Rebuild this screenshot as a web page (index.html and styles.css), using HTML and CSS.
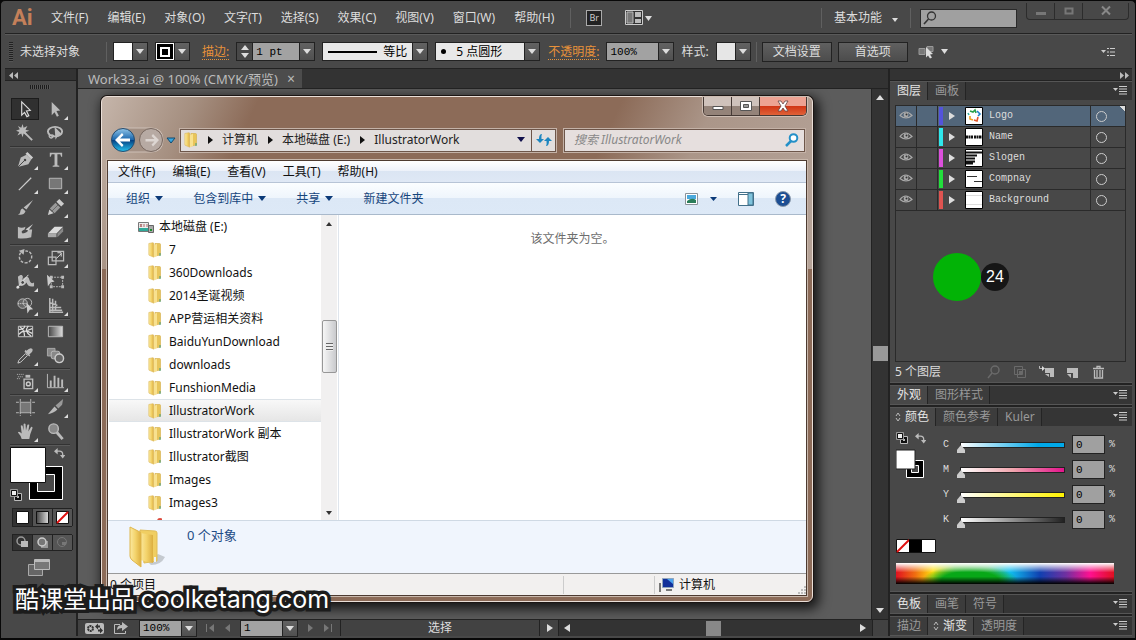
FILE: index.html
```html
<!DOCTYPE html>
<html lang="zh-CN">
<head>
    <meta charset="UTF-8">
    <meta name="viewport" content="width=device-width, initial-scale=1.0">
    <title>Work33.ai</title>
    <link rel="stylesheet" href="styles.css">
</head>
<body>
    <svg class="defs" width="0" height="0" aria-hidden="true">
        <defs>
            <linearGradient id="gold" x1="0" x2="1"><stop offset="0" stop-color="#fbe9a0"/><stop offset=".5" stop-color="#f3d36b"/><stop offset="1" stop-color="#dcae3f"/></linearGradient>
            <linearGradient id="fade" x1="0" x2="1"><stop offset="0" stop-color="#444"/><stop offset="1" stop-color="#ddd"/></linearGradient>
            <linearGradient id="blue" x1="0" x2="0" y1="0" y2="1"><stop offset="0" stop-color="#8fc4e8"/><stop offset=".48" stop-color="#1c67ad"/><stop offset=".5" stop-color="#043d80"/><stop offset="1" stop-color="#25c2ee"/></linearGradient>
            <symbol id="folder" viewBox="0 0 14 16">
                <path d="M7 1.500h4.500q1 0 1 1v10.500l-5.500 1z" fill="#e8c55b" stroke="#d4ac48" stroke-width=".6"/>
                <path d="M.8 1.500l4-.8q1 0 1 1v13.500l-4-1.700q-1 0-1-1z" fill="url(#gold)" stroke="#dcb95c" stroke-width=".6"/>
                <path d="M6 3l3-1.300v12.300l-3 1.300z" fill="#f8e18f"/>
                <path d="M12 11v3" stroke="#5aa37c" stroke-width="1.200"/>
            </symbol>
            <symbol id="eye" viewBox="0 0 14 10">
                <path d="M1 5.500q5.500-7 12 0q-6 5-12 0z" fill="none" stroke="#aaa" stroke-width="1.200"/>
                <circle cx="7" cy="5" r="2.400" fill="#aaa"/><circle cx="7.500" cy="4.500" r="1" fill="#333"/>
            </symbol>
            <symbol id="menu" viewBox="0 0 15 9">
                <path d="M0 2h5l-2.500 3z" fill="#ccc"/><path d="M6 .5h8M6 3h8M6 5.500h8M6 8h8" stroke="#ccc"/>
            </symbol>
            <symbol id="swap" viewBox="0 0 12 12">
                <path d="M3 3.500h3q3.500 0 3.500 3.500v1.500" fill="none" stroke="#bbb" stroke-width="1.400"/>
                <path d="M4 0v7L0 3.500zM6.500 7.500h6l-3 4z" fill="#bbb"/>
            </symbol>
            <symbol id="mini" viewBox="0 0 12 12">
                <path d="M4.500 4.500h7v7h-7z" fill="#111" stroke="#bbb"/><path d="M7 7h2v2H7z" fill="#bbb"/><path d="M1.500 1.500h5v5h-5z" fill="#eee" stroke="#111"/><path d="M.5.500h7v7h-7z" fill="none" stroke="#999"/>
            </symbol>
            <symbol id="updown" viewBox="0 0 6 10">
                <path d="M1 4l2-3 2 3M1 6l2 3 2-3" fill="none" stroke="#bbb"/>
            </symbol>
        </defs>
    </svg>

    <div class="app">
        <header class="menubar">
            <div class="app-logo">Ai</div>
            <nav class="menus">
                <button>文件(F)</button>
                <button>编辑(E)</button>
                <button>对象(O)</button>
                <button>文字(T)</button>
                <button>选择(S)</button>
                <button>效果(C)</button>
                <button>视图(V)</button>
                <button>窗口(W)</button>
                <button>帮助(H)</button>
            </nav>
            <span class="divider"></span>
            <button class="bridge">Br</button>
            <button class="arrange" aria-label="排列文档">
                <svg width="28" height="16" viewBox="0 0 28 16"><path d="M.5.500h17v14H.5z" fill="#333" stroke="#ccc"/><path d="M2 2h6v11H2z" fill="#777" stroke="#bbb"/><path d="M10 2h6v5h-6zM10 9h6v4h-6z" fill="#bbb"/><path d="M20 6h7l-3.500 5z" fill="#ddd"/></svg>
            </button>
            <div class="menubar-right">
                <span class="divider"></span>
                <button class="workspace-btn">基本功能 <i class="tri"></i></button>
                <span class="divider"></span>
                <label class="app-search">
                    <svg width="14" height="14" viewBox="0 0 14 14"><circle cx="8.500" cy="5" r="4" fill="none" stroke="#333" stroke-width="1.300"/><path d="M5.500 8L1 13" stroke="#333" stroke-width="1.600"/></svg>
                    <input type="text" aria-label="搜索">
                </label>
                <div class="win-btns">
                    <button aria-label="最小化"><svg width="12" height="12"><path d="M1 7h10v3H1z" fill="#777"/></svg></button>
                    <button aria-label="最大化"><svg width="12" height="12"><path d="M2.500 3.500h7v5h-7z" fill="none" stroke="#777" stroke-width="2"/></svg></button>
                    <button class="wide" aria-label="关闭"><svg width="12" height="12"><path d="M2 1.500l8 8M10 1.500l-8 8" stroke="#888" stroke-width="2"/></svg></button>
                </div>
            </div>
        </header>

        <div class="controlbar">
            <span class="grip"></span>
            <span class="selection">未选择对象</span>
            <span class="divider"></span>
            <div class="combo swatch-combo"><button class="fill" aria-label="填色"></button><button class="arrow" aria-label="填色列表"></button></div>
            <div class="combo stroke-combo"><button class="stroke" aria-label="描边颜色"><i></i></button><button class="arrow" aria-label="描边列表"></button></div>
            <a class="panel-link stroke-link" href="#">描边:</a>
            <div class="combo weight">
                <button class="stepper" aria-label="粗细"><i class="up"></i><i class="tri"></i></button>
                <input class="mono" type="text" value="1 pt" aria-label="描边粗细"><button class="arrow" aria-label="粗细列表"></button>
            </div>
            <div class="combo profile"><button class="light"><i class="line"></i>等比</button><button class="arrow" aria-label="宽度配置"></button></div>
            <div class="combo brush"><button class="light"><i class="dot"></i>5 点圆形</button><button class="arrow" aria-label="画笔"></button></div>
            <a class="panel-link" href="#">不透明度:</a>
            <div class="combo opacity"><input class="mono" type="text" value="100%" aria-label="不透明度"><button class="arrow" aria-label="不透明度列表"></button></div>
            <span class="style-label">样式:</span>
            <div class="combo"><button class="fill grey" aria-label="样式"></button><button class="arrow" aria-label="样式列表"></button></div>
            <span class="divider"></span>
            <button class="bar-btn">文档设置</button>
            <button class="bar-btn">首选项</button>
            <button class="similar" aria-label="选择类似的对象">
                <svg width="32" height="16" viewBox="0 0 32 16"><path d="M1 4.500h6v6H1zM9 2.500h6v5H9z" fill="#777" stroke="#999"/><path d="M8 3l7 7-3 .5 2 3-2 1-2-3-2 2z" fill="#ddd"/><path d="M23 5h7l-3.500 5z" fill="#ddd"/></svg>
            </button>
            <button class="bar-menu" aria-label="面板菜单">
                <svg width="15" height="10" viewBox="0 0 15 10"><path d="M0 3h5l-2.500 3z" fill="#ccc"/><path d="M6 1.500h2M9 1.500h5M6 5h2M9 5h5M6 8.500h2M9 8.500h5" stroke="#ccc"/></svg>
            </button>
        </div>

        <div class="work">
            <aside class="tools">
                <div class="dock-head"><svg width="9" height="7"><path d="M4 0v7L0 3.500zM9 0v7L5 3.500z" fill="#bbb"/></svg></div>
                <span class="tool-grip"></span>
                <div class="tool-group">
                    <button class="tool on" aria-label="选择"><svg viewBox="0 0 20 20"><path d="M6 2l9 9-4 .5 2.500 5-2 1L9 13l-3 3z" fill="#333" stroke="#ddd" stroke-width="1.200"/></svg></button>
                    <button class="tool more" aria-label="直接选择"><svg viewBox="0 0 20 20"><path d="M6 2l9 9-4 .5 2.500 5-2 1L9 13l-3 3z" fill="#bbb"/></svg></button>
                    <button class="tool" aria-label="魔棒"><svg viewBox="0 0 20 20"><path d="M7 0l1 4 4-2-2 4 4 1-4 1.500 2 3.500-4-2-1 4-1.500-4-4 2 2-3.500-3.500-1.500 4-1.500-2-3.500 3.500 2z" fill="#bbb"/><path d="M9 9l8 8" stroke="#bbb" stroke-width="2"/></svg></button>
                    <button class="tool" aria-label="套索"><svg viewBox="0 0 20 20"><ellipse cx="9.500" cy="8" rx="7.500" ry="5" fill="none" stroke="#bbb" stroke-width="2"/><path d="M4 11c-2 2 1 5 3 3s0-3-2-2" fill="none" stroke="#bbb" stroke-width="1.300"/><path d="M9 3l8 8-4 .5-3 5z" fill="#bbb"/></svg></button>
                </div>
                <div class="tool-group">
                    <button class="tool more" aria-label="钢笔"><svg viewBox="0 0 20 20"><path d="M2 18L5 8l6-3 5 5-3 5z" fill="#bbb"/><path d="M12 2l6 6-2 2-6-6z" fill="#ccc"/><path d="M2 18l7-7" stroke="#444"/><circle cx="9.500" cy="10.500" r="1.300" fill="#444"/></svg></button>
                    <button class="tool more" aria-label="文字"><svg viewBox="0 0 20 20"><path d="M4 3h13v4h-1l-1-2.500h-3V16l2 .5v1H7v-1l2-.5V4.500H6L5 7H4z" fill="#bbb"/></svg></button>
                    <button class="tool more" aria-label="直线"><svg viewBox="0 0 20 20"><path d="M3 17L16 4" stroke="#ccc" stroke-width="1.300"/></svg></button>
                    <button class="tool more" aria-label="矩形"><svg viewBox="0 0 20 20"><path d="M3.500 4.500h13v11h-13z" fill="#777" stroke="#bbb"/></svg></button>
                    <button class="tool" aria-label="画笔"><svg viewBox="0 0 20 20"><path d="M18 2l-7 10-3-2zM2 17c4 0 1-5 5-6l3 3c-1 4-6 4-8 3z" fill="#bbb"/></svg></button>
                    <button class="tool more" aria-label="铅笔"><svg viewBox="0 0 20 20"><path d="M2 18l1.500-6 4.500 4z" fill="#ccc"/><path d="M4 11l6-6 5 5-6 6z" fill="#999"/><path d="M11 4l3-3 5 5-3 3z" fill="#ccc"/><path d="M6 14l7-7" stroke="#666"/></svg></button>
                    <button class="tool" aria-label="斑点画笔"><svg viewBox="0 0 20 20"><path d="M2 5q4 2 8 0l-1 3q-5 2-2 4 5 0 6-4h4l-1 8q-7 2-14 1z" fill="#bbb"/><path d="M18 2l-5 7-3-1z" fill="#ccc"/></svg></button>
                    <button class="tool more" aria-label="橡皮擦"><svg viewBox="0 0 20 20"><path d="M2 12l7-7h9l-7 7z" fill="#ddd"/><path d="M2 12h9v4H2z" fill="#aaa"/><path d="M12 12l6-6v4l-6 6z" fill="#888"/></svg></button>
                </div>
                <div class="tool-group">
                    <button class="tool more" aria-label="旋转"><svg viewBox="0 0 20 20"><path d="M5 5a6.500 6.500 0 1 0 10 0q-3-3-8-1" fill="none" stroke="#bbb" stroke-width="1.500" stroke-dasharray="3 1.500"/><path d="M3 3l6-2-1 6z" fill="#bbb"/></svg></button>
                    <button class="tool more" aria-label="比例缩放"><svg viewBox="0 0 20 20"><path d="M6.500 3.500h12v10h-12zM2.500 9.500h8v8h-8z" fill="none" stroke="#bbb" stroke-width="1.300"/><path d="M11 11l5-5M12 5h4v4" stroke="#ddd" fill="none"/></svg></button>
                    <button class="tool more" aria-label="宽度"><svg viewBox="0 0 20 20"><path d="M2 5c4-4 7-1 4 4 4-5 7-5 8-1 1 3 2 5 5 3v4c-5 1-7-1-8-4-2 3-5 5-8 3z" fill="#bbb"/><path d="M1 17l12-14" stroke="#ddd"/><circle cx="7" cy="11" r="2" fill="#444" stroke="#ddd"/><circle cx="2" cy="16" r="1.500" fill="#ddd"/></svg></button>
                    <button class="tool" aria-label="自由变换"><svg viewBox="0 0 20 20"><path d="M5.500 5.500h12v10h-12z" fill="none" stroke="#bbb" stroke-dasharray="2 1"/><path d="M4 4h3v3H4zM16 4h3v3h-3zM4 14h3v3H4zM16 14h3v3h-3z" fill="#bbb"/><path d="M1 3l8 7-4 1-3 4z" fill="#ccc"/></svg></button>
                    <button class="tool more" aria-label="形状生成器"><svg viewBox="0 0 20 20"><circle cx="7" cy="8" r="5" fill="#666" stroke="#bbb"/><circle cx="12" cy="7" r="4.500" fill="none" stroke="#bbb"/><path d="M2 8h10" stroke="#ddd" stroke-dasharray="1 1"/><path d="M11 7l7 7-3.500.5-2.500 4z" fill="#ccc"/></svg></button>
                    <button class="tool more" aria-label="透视网格"><svg viewBox="0 0 20 20"><path d="M4 2v15h14M7 3v13M10 5v10M4 7l8 3M4 12h12M4 15h13" stroke="#bbb" stroke-width="1.600" fill="none"/></svg></button>
                </div>
                <div class="tool-group">
                    <button class="tool" aria-label="网格"><svg viewBox="0 0 20 20"><path d="M2.500 4.500h15v11h-15z" fill="#444" stroke="#ccc"/><path d="M3 8q7-1 6-4M3 13q5-6 14-1M13 4q-5 6 3 11M4 5q5 3 5 10M17 7l-5 2" stroke="#ddd" fill="none" stroke-width="1.300"/></svg></button>
                    <button class="tool" aria-label="渐变"><svg viewBox="0 0 20 20"><path d="M2.500 4.500h15v11h-15z" fill="url(#fade)" stroke="#bbb"/></svg></button>
                    <button class="tool more" aria-label="吸管"><svg viewBox="0 0 20 20"><path d="M2 18l1-3 7-7 2 2-7 7z" fill="none" stroke="#ccc"/><path d="M9 6l5 5 1-1-1-1q5-4 3-6t-6 2l-1-1z" fill="#bbb"/></svg></button>
                    <button class="tool" aria-label="混合"><svg viewBox="0 0 20 20"><path d="M1.500 2.500h8v8h-8z" fill="#888" stroke="#aaa"/><rect x="5.500" y="5.500" width="9" height="8" rx="2" fill="#888" stroke="#bbb"/><circle cx="14" cy="13" r="4.500" fill="#666" stroke="#ccc" stroke-width="1.500"/></svg></button>
                </div>
                <div class="tool-group">
                    <button class="tool more" aria-label="符号喷枪"><svg viewBox="0 0 20 20"><path d="M8.500 7.500h9v10h-9z" fill="none" stroke="#bbb" stroke-width="1.500"/><path d="M10 3h5v3h-5z" fill="#bbb"/><circle cx="13" cy="12.500" r="2" fill="none" stroke="#ccc" stroke-width="1.500"/><path d="M1 2.500h8M2 5h6M1 7h4" stroke="#bbb" stroke-dasharray="1 1"/></svg></button>
                    <button class="tool more" aria-label="柱形图"><svg viewBox="0 0 20 20"><path d="M1.500 2v14.500H19" stroke="#bbb" fill="none"/><path d="M5 9v7M9 4v12M13 6v10M17 8v8" stroke="#bbb" stroke-width="2"/></svg></button>
                </div>
                <div class="tool-group">
                    <button class="tool" aria-label="画板"><svg viewBox="0 0 20 20"><path d="M5 5h10v10H5z" fill="#777"/><path d="M4.500 1v18M15.500 1v18M0 4.500h20M0 15.500h20" stroke="#bbb" stroke-dasharray="3 1 12 1"/></svg></button>
                    <button class="tool more" aria-label="切片"><svg viewBox="0 0 20 20"><path d="M2 17l7-8 3 3q-4 4-10 5z" fill="#bbb"/><path d="M10 8l8-7-1 6-4 4z" fill="#999"/></svg></button>
                    <button class="tool more" aria-label="抓手"><svg viewBox="0 0 20 20"><path d="M6 18q-1-4-4-7 1-2 4 1L5 4q1-1 2 0l1 5V2q1-1 2 0l.5 7L12 3q1-1 2 0l-1 7 3-5q1 0 1.500 1L15 13l-1 5z" fill="#bbb"/></svg></button>
                    <button class="tool" aria-label="缩放"><svg viewBox="0 0 20 20"><circle cx="8" cy="7" r="5" fill="#888" stroke="#bbb" stroke-width="1.500"/><path d="M11.500 11l6 7" stroke="#bbb" stroke-width="3"/></svg></button>
                </div>
                <button class="paint" aria-label="填色和描边">
                    <svg width="56" height="56" viewBox="0 0 56 56">
                        <path d="M19.500 19.500h33v33h-33z" fill="#000" stroke="#fff"/><path d="M27.500 27.500h17v17h-17z" fill="#484848" stroke="#fff"/>
                        <path d="M.5.500h35v35H.5z" fill="#fff" stroke="#111"/>
                        <use href="#swap" x="44" y="1" width="11" height="11"/><use href="#mini" x="0" y="42" width="12" height="12"/>
                    </svg>
                </button>
                <div class="mode-row">
                    <button class="pressed" aria-label="颜色"><svg width="13" height="13"><path d="M.5.500h12v12H.5z" fill="#fff" stroke="#111"/></svg></button>
                    <button aria-label="渐变填充"><svg width="13" height="13"><path d="M.5.500h12v12H.5z" fill="url(#fade)" stroke="#111"/></svg></button>
                    <button aria-label="无"><svg width="13" height="13"><path d="M.5.500h12v12H.5z" fill="#fff" stroke="#111"/><path d="M1 12L12 1" stroke="#e01010" stroke-width="2"/></svg></button>
                </div>
                <div class="mode-row">
                    <button class="pressed" aria-label="正常绘图"><svg width="13" height="13"><circle cx="5" cy="5" r="4" fill="none" stroke="#999" stroke-width="1.500"/><path d="M5 5h7v6H5z" fill="#bbb"/></svg></button>
                    <button aria-label="背面绘图"><svg width="13" height="13"><path d="M5 5h7v7H5z" fill="#999"/><circle cx="6" cy="6" r="4" fill="#777" stroke="#ccc" stroke-width="1.500"/></svg></button>
                    <button aria-label="内部绘图"><svg width="13" height="13"><circle cx="6" cy="6" r="4.500" fill="none" stroke="#777"/><path d="M6 6h4v3H6z" fill="#777"/></svg></button>
                </div>
                <button class="screen-mode" aria-label="屏幕模式"><svg width="22" height="17"><path d="M.5 5.500h14v11H.5z" fill="#666" stroke="#aaa"/><path d="M6.500.500h15v10h-15z" fill="#777" stroke="#bbb"/><path d="M7 2h14" stroke="#bbb" stroke-width="2"/></svg></button>
            </aside>

            <main class="document">
                <div class="doc-tabs"><div class="doc-tab">Work33.ai @ 100% (CMYK/预览)<button aria-label="关闭文档">×</button></div></div>
                <div class="doc-body">
                    <div class="canvas">
                        <section class="explorer">
                            <div class="ex-title">
                                <div class="ex-winbtns">
                                    <button aria-label="最小化"><svg width="14" height="12"><path d="M2 6.500h10v3H2z" fill="#fff" stroke="#555"/></svg></button>
                                    <button aria-label="最大化"><svg width="14" height="12"><path d="M1.500 1.500h11v9h-11z" fill="#fff" stroke="#555"/><path d="M4.500 4.500h5v3h-5z" fill="#999" stroke="#555"/></svg></button>
                                    <button class="ex-close" aria-label="关闭"><svg width="14" height="12"><path d="M2 1h3l2 3 2-3h3L9 6l3 5H9L7 8l-2 3H2l3-5z" fill="#fff" stroke="#644" stroke-width=".8"/></svg></button>
                                </div>
                            </div>
                            <div class="ex-nav">
                                <button class="ex-back" aria-label="后退">
                                    <svg width="66" height="26" viewBox="0 0 66 26"><path d="M12 1h29q12 0 12 12t-12 12H12z" fill="#a39084" stroke="#cdbfb6"/><circle cx="13" cy="13" r="11.500" fill="url(#blue)" stroke="#274c6e"/><path d="M5 13l7-7 1.500 2-3.500 3.500h10v3H10l3.500 3.500-1.500 2z" fill="#fff"/><circle cx="41" cy="13" r="11.500" fill="#b7aaa3" stroke="#786860"/><path d="M49 13l-6-6-1.500 2 3 3h-9v2.500h9l-3 3 1.500 2z" fill="#ddd6d2"/><path d="M57 11h8l-4 5z" fill="#38a7e0" stroke="#124a70"/></svg>
                                </button>
                                <div class="ex-address">
                                    <svg width="14" height="16"><use href="#folder"/></svg>
                                    <i class="crumb"></i><a href="#">计算机</a>
                                    <i class="crumb"></i><a href="#">本地磁盘 (E:)</a>
                                    <i class="crumb"></i><a href="#">IllustratorWork</a>
                                    <button class="ex-drop" aria-label="历史"><i class="tri navy"></i></button>
                                    <button class="ex-refresh" aria-label="刷新"><svg width="16" height="14" viewBox="0 0 16 14"><path d="M6 1Q3 1 3 6H0l4 4 4-4H5.500Q5 3 6 1zM10 13q3 0 3-5h3l-4-4-4 4h2.500q.5 3-.5 5z" fill="#1c86c0"/></svg></button>
                                </div>
                                <label class="ex-search"><input type="text" placeholder="搜索 IllustratorWork" aria-label="搜索文件夹"><svg width="14" height="14" viewBox="0 0 14 14"><circle cx="8.500" cy="5" r="3.800" fill="#fff" stroke="#2490c8" stroke-width="2"/><path d="M6 8l-5 5" stroke="#2490c8" stroke-width="2.500"/></svg></label>
                            </div>
                            <div class="ex-body">
                                <nav class="ex-menu"><button>文件(F)</button><button>编辑(E)</button><button>查看(V)</button><button>工具(T)</button><button>帮助(H)</button></nav>
                                <div class="ex-toolbar">
                                    <button>组织 <i class="tri"></i></button>
                                    <button>包含到库中 <i class="tri"></i></button>
                                    <button>共享 <i class="tri"></i></button>
                                    <button>新建文件夹</button>
                                    <div class="ex-views">
                                        <button aria-label="视图"><svg width="32" height="12"><path d="M.5.500h12v11H.5z" fill="#fff" stroke="#8a9299"/><path d="M2 2h9v4H2z" fill="#4aa9dd"/><path d="M2 8q5-4 9-1v3H2z" fill="#2b7d5a"/><path d="M25 4h7l-3.500 4z" fill="#0b3a78"/></svg></button>
                                        <button aria-label="预览窗格"><svg width="16" height="14"><path d="M.5.500h15v13H.5z" fill="#fff" stroke="#42708a"/><path d="M1 2.500h9" stroke="#42708a"/><path d="M10 1h5v12h-5z" fill="#7fc3dc" stroke="#42708a"/></svg></button>
                                        <button class="help" aria-label="帮助">?</button>
                                    </div>
                                </div>
                                <div class="ex-content">
                                    <ul class="tree">
                                        <li class="drive"><svg width="16" height="12"><path d="M.5 1.500h10v9H.5z" fill="#eee" stroke="#777"/><path d="M2 3l2 3M4 3L2 6M6 3v3M9 3v3" stroke="#a66"/><path d="M1 7h9v3H1z" fill="#30a898"/><path d="M10.500 4.500h5v7h-5z" fill="#aaa" stroke="#666"/><path d="M12 8h2v2h-2z" fill="#1b8c2c"/></svg>本地磁盘 (E:)</li>
                                        <li><svg width="14" height="16"><use href="#folder"/></svg>7</li>
                                        <li><svg width="14" height="16"><use href="#folder"/></svg>360Downloads</li>
                                        <li><svg width="14" height="16"><use href="#folder"/></svg>2014圣诞视频</li>
                                        <li><svg width="14" height="16"><use href="#folder"/></svg>APP营运相关资料</li>
                                        <li><svg width="14" height="16"><use href="#folder"/></svg>BaiduYunDownload</li>
                                        <li><svg width="14" height="16"><use href="#folder"/></svg>downloads</li>
                                        <li><svg width="14" height="16"><use href="#folder"/></svg>FunshionMedia</li>
                                        <li class="current"><svg width="14" height="16"><use href="#folder"/></svg>IllustratorWork</li>
                                        <li><svg width="14" height="16"><use href="#folder"/></svg>IllustratorWork 副本</li>
                                        <li><svg width="14" height="16"><use href="#folder"/></svg>Illustrator截图</li>
                                        <li><svg width="14" height="16"><use href="#folder"/></svg>Images</li>
                                        <li><svg width="14" height="16"><use href="#folder"/></svg>Images3</li>
                                        <li><svg width="14" height="16"><circle cx="12" cy="3" r="3" fill="#dc4a3c"/></svg></li>
                                    </ul>
                                    <div class="tree-scroll"><i class="up"></i><button class="tree-thumb" aria-label="滚动"><i></i></button><i class="tri"></i></div>
                                    <div class="files">该文件夹为空。</div>
                                </div>
                                <div class="ex-details">
                                    <svg width="40" height="44" viewBox="0 0 40 44"><path d="M22 37l10-8 7 3q-4 8-14 8z" fill="#a9adb3" opacity=".6"/><path d="M14 5l15 1q2 0 2 2v28l-13 2z" fill="#f0ce62" stroke="#e0bd58"/><path d="M14 8l13 2v28l-13-3z" fill="url(#gold)"/><path d="M4 2l10 5q1 1 1 2v33l-9-7q-2-2-2-4z" fill="url(#gold)" stroke="#dfb64c"/><path d="M29 32v5" stroke="#eef4f8" stroke-width="2"/></svg>
                                    <span>0 个对象</span>
                                </div>
                                <div class="ex-status">
                                    <span class="items">0 个项目</span><span class="blank"></span>
                                    <span class="computer"><svg width="16" height="14"><path d="M3.500.500h11v9h-11z" fill="#12309a" stroke="#8fa5bd"/><path d="M8 1h6v5z" fill="#4ba3ef"/><path d="M1 5v9M7 12h6" stroke="#777" stroke-width="2"/></svg>计算机</span>
                                    <svg class="resize" width="9" height="9"><path d="M7 1h2M4 4h2M7 4h2M1 7h2M4 7h2M7 7h2" stroke="#aaa" stroke-width="1.500"/></svg>
                                </div>
                            </div>
                        </section>
                    </div>
                    <div class="vscroll"><i class="up"></i><button class="vthumb" aria-label="垂直滚动"></button><i class="tri"></i></div>
                </div>
                <footer class="statusbar">
                    <button class="gear" aria-label="设置"><svg width="19" height="11"><rect width="19" height="11" rx="2" fill="#bbb"/><circle cx="5.500" cy="5.500" r="2.500" fill="none" stroke="#333" stroke-width="2" stroke-dasharray="2 .6"/><path d="M10 3.500l3-3v2h2v2h-2v2zM18 7.500l-3-3v2h-2v2h2v2z" fill="#333"/></svg></button>
                    <button class="share" aria-label="共享"><svg width="14" height="12"><path d="M6 2.500H.5v9h11V9" fill="none" stroke="#bbb"/><path d="M3 8q0-5 5-5V0l6 4.500L8 9V6Q5 6 3 8z" fill="#bbb"/></svg></button>
                    <div class="combo"><input class="mono" type="text" value="100%" aria-label="缩放比例"><button class="arrow" aria-label="缩放列表"></button></div>
                    <button class="step" aria-label="上一个"><svg width="25" height="8"><path d="M.5 0v8" stroke="#777"/><path d="M8 0v8L3 4zM24 0v8l-5-4z" fill="#777"/></svg></button>
                    <div class="combo"><input class="mono" type="text" value="1" aria-label="画板"><button class="arrow" aria-label="画板列表"></button></div>
                    <button class="step" aria-label="下一个"><svg width="25" height="8"><path d="M24.500 0v8" stroke="#777"/><path d="M1 0v8l5-4zM17 0v8l5-4z" fill="#777"/></svg></button>
                    <div class="current-tool">选择</div>
                    <button class="play" aria-label="显示"><i class="right"></i></button>
                    <div class="hscroll"><i class="left"></i><button class="hthumb" aria-label="水平滚动"></button><i class="right"></i></div>
                    <span class="corner"></span>
                </footer>
            </main>

            <aside class="dock">
                <div class="dock-head end"><svg width="9" height="7"><path d="M0 0v7l4-3.500zM5 0v7l4-3.500z" fill="#bbb"/></svg></div>
                <section class="panel layers">
                    <div class="tabs"><button class="active">图层</button><button>画板</button><svg class="tab-menu" width="15" height="9"><use href="#menu"/></svg></div>
                    <div class="layer-list">
                        <div class="layer selected"><span><svg width="14" height="10"><use href="#eye"/></svg></span><span></span><i class="blue"></i><b></b><svg width="18" height="18"><path d="M.5.500h17v17H.5z" fill="#fff" stroke="#000"/><path d="M5 4l3 1 2-2 1 3" fill="none" stroke="#28a048" stroke-width="1.600"/><path d="M12 4l3 3-2 2" fill="none" stroke="#1f7fc8" stroke-width="1.600"/><path d="M13 10l-1 4-3-1" fill="none" stroke="#e0562c" stroke-width="1.600"/><path d="M8 13l-3-1v-3" fill="none" stroke="#f0a020" stroke-width="1.600"/><path d="M4 8l-1-2" stroke="#38b0a0" stroke-width="1.600"/></svg><em>Logo</em><span class="target"></span></div>
                        <div class="layer"><span><svg width="14" height="10"><use href="#eye"/></svg></span><span></span><i class="cyan"></i><b></b><svg width="18" height="18"><path d="M.5.500h17v17H.5z" fill="#fff" stroke="#000"/><path d="M1 9h7M9 9h8" stroke="#111" stroke-width="3" stroke-dasharray="2 .5"/></svg><em>Name</em><span class="target"></span></div>
                        <div class="layer"><span><svg width="14" height="10"><use href="#eye"/></svg></span><span></span><i class="pink"></i><b></b><svg width="18" height="18"><path d="M.5.500h17v17H.5z" fill="#fff" stroke="#000"/><path d="M1 3.500h16M1 6.500h11M1 9.500h9M1 12.500h9M1 14.500h7" stroke="#111" stroke-width="2"/></svg><em>Slogen</em><span class="target"></span></div>
                        <div class="layer"><span><svg width="14" height="10"><use href="#eye"/></svg></span><span></span><i class="green"></i><b></b><svg width="18" height="18"><path d="M.5.500h17v17H.5z" fill="#fff" stroke="#000"/><path d="M2 6.500h10M9 11.500h8" stroke="#333"/></svg><em>Compnay</em><span class="target"></span></div>
                        <div class="layer"><span><svg width="14" height="10"><use href="#eye"/></svg></span><span></span><i class="red"></i><b></b><svg width="18" height="18"><path d="M.5.500h17v17H.5z" fill="#fff" stroke="#000"/><path d="M1 4.500h16M1 13.500h16" stroke="#ddd"/></svg><em>Background</em><span class="target"></span></div>
                    </div>
                    <div class="layer-foot">
                        <span>5 个图层</span>
                        <button aria-label="定位对象"><svg width="14" height="14"><circle cx="8" cy="5" r="4" fill="none" stroke="#6a6a6a" stroke-width="1.500"/><path d="M5 8l-4 5" stroke="#6a6a6a" stroke-width="1.500"/></svg></button>
                        <button aria-label="剪切蒙版"><svg width="14" height="14"><path d="M1.500 1.500h8v8h-8zM4.500 4.500h8v8h-8z" fill="none" stroke="#6a6a6a"/><path d="M6 6h3v3H6z" fill="#6a6a6a"/></svg></button>
                        <button aria-label="新建子图层"><svg width="15" height="14"><path d="M6 3h9v9h-4V8H6z" fill="#bbb"/><path d="M6 9l4 3V9z" fill="#bbb"/><path d="M.5 1v2.500H4" fill="none" stroke="#bbb"/><path d="M3 1l3 2.500L3 6z" fill="#ddd"/></svg></button>
                        <button aria-label="新建图层"><svg width="14" height="14"><path d="M1 3h11v10H7V8H1z" fill="#bbb"/><path d="M1 9l4 4V9z" fill="#bbb"/></svg></button>
                        <button aria-label="删除"><svg width="14" height="14"><path d="M1 3.500h11M5 3V1.500h3V3" fill="none" stroke="#bbb" stroke-width="1.300"/><path d="M2.500 5v8h8V5M5 5v7M8 5v7" fill="none" stroke="#bbb" stroke-width="1.300"/></svg></button>
                    </div>
                    <!-- click counter shown over the panel -->
                    <div class="click-mark"><span class="ball"></span><span class="count">24</span></div>
                </section>
                <section class="panel"><div class="tabs"><button class="active">外观</button><button>图形样式</button><svg class="tab-menu" width="15" height="9"><use href="#menu"/></svg></div></section>
                <section class="panel">
                    <div class="tabs"><button class="active sort"><svg width="6" height="10"><use href="#updown"/></svg>颜色</button><button>颜色参考</button><button>Kuler</button><svg class="tab-menu" width="15" height="9"><use href="#menu"/></svg></div>
                    <div class="color-body">
                        <div class="mixer">
                            <svg width="32" height="50" viewBox="0 0 32 50"><use href="#mini" x="0" y="0" width="12" height="12"/><use href="#swap" x="19" y="1" width="11" height="11"/><path d="M10.500 28.500h17v17h-17z" fill="#000" stroke="#fff"/><path d="M15.500 33.500h7v7h-7z" fill="#484848" stroke="#fff"/><path d="M0 18h19v19H0z" fill="#fff" stroke="#222"/></svg>
                            <div class="sliders">
                                <div class="slider-row"><label for="c">C</label><input id="c" class="range cyan" type="range" value="0"><input class="mono" type="text" value="0" aria-label="C 值"><span>%</span></div>
                                <div class="slider-row"><label for="m">M</label><input id="m" class="range magenta" type="range" value="0"><input class="mono" type="text" value="0" aria-label="M 值"><span>%</span></div>
                                <div class="slider-row"><label for="y">Y</label><input id="y" class="range yellow" type="range" value="0"><input class="mono" type="text" value="0" aria-label="Y 值"><span>%</span></div>
                                <div class="slider-row"><label for="k">K</label><input id="k" class="range black" type="range" value="0"><input class="mono" type="text" value="0" aria-label="K 值"><span>%</span></div>
                            </div>
                        </div>
                        <svg class="chips" width="40" height="14"><path d="M.5.500h39v13H.5z" fill="#fff" stroke="#111"/><path d="M1 13L13 1" stroke="#e01010" stroke-width="2"/><path d="M13 1h13v12H13z"/></svg>
                        <div class="spectrum"></div>
                    </div>
                </section>
                <section class="panel"><div class="tabs"><button class="active">色板</button><button>画笔</button><button>符号</button><svg class="tab-menu" width="15" height="9"><use href="#menu"/></svg></div></section>
                <section class="panel"><div class="tabs"><button>描边</button><button class="active sort"><svg width="6" height="10"><use href="#updown"/></svg>渐变</button><button>透明度</button><svg class="tab-menu" width="15" height="9"><use href="#menu"/></svg></div></section>
            </aside>
        </div>
    </div>
    <div class="watermark">酷课堂出品 <span>coolketang.com</span></div>
</body>
</html>
```
FILE: styles.css
```css
* {
    box-sizing: border-box;
}

body {
    margin: 0;
    height: 100vh;
    overflow: hidden;
    background-color: #080808;
    color: #ddd;
    font-family: "Noto Sans", "Noto Sans CJK SC", sans-serif;
    font-size: 12px;
    line-height: 16px;
}

button, input {
    margin: 0;
    padding: 0;
    border: none;
    border-radius: 0;
    background: none;
    color: inherit;
    font: inherit;
    min-width: 0;
}

button {
    white-space: nowrap;
    flex-shrink: 0;
}

svg {
    display: block;
    flex-shrink: 0;
}

.defs {
    position: absolute;
}

.mono {
    font-family: "Liberation Mono", monospace;
    font-size: 11px;
}

.app {
    display: flex;
    flex-direction: column;
    height: 100vh;
    padding: 2px 3px 2px 4px;
    background-color: #484848;
    border: 1px solid #080808;
    border-bottom-width: 2px;
    border-radius: 5px 5px 0 0;
}

.tri, .up, .left, .right {
    display: inline-block;
    width: 0;
    height: 0;
    border: 4px solid transparent;
    flex-shrink: 0;
}

.tri {
    border-top: 5px solid #ddd;
    border-bottom: none;
}

.up {
    border-bottom: 5px solid #ddd;
    border-top: none;
}

.left {
    border-right: 6px solid #ddd;
    border-left: none;
}

.right {
    border-left: 6px solid #ddd;
    border-right: none;
}

.divider {
    width: 1px;
    height: 20px;
    background-color: #2e2e2e;
    border-right: 1px solid #606060;
    flex-shrink: 0;
}

/* menu bar */
.menubar {
    display: flex;
    align-items: center;
    height: 31px;
    flex-shrink: 0;
    border-bottom: 1px solid #222;
    font-size: 12px;
}

.app-logo {
    width: 38px;
    padding-left: 7px;
    color: #c4805a;
    font-family: Roboto, sans-serif;
    font-size: 22px;
    font-weight: bold;
    line-height: 28px;
}

.menus {
    display: flex;
    gap: 19px;
    padding-left: 8px;
    margin-right: 16px;
}

.bridge {
    width: 16px;
    height: 16px;
    margin-left: 15px;
    border: 1px solid #aaa;
    background-color: #222;
    color: #ccc;
    font-size: 9px;
    line-height: 12px;
}

.arrange {
    margin-left: 23px;
}

.menubar-right {
    display: flex;
    align-items: center;
    align-self: stretch;
    margin-left: auto;
}

.workspace-btn {
    padding: 0 12px;
}

.workspace-btn .tri {
    margin-left: 7px;
    border-width: 4px 3px 0;
}

.app-search {
    display: flex;
    align-items: center;
    width: 97px;
    height: 19px;
    margin: 0 9px;
    padding-left: 2px;
    background-color: #a0a0a0;
    border: 1px solid #2a2a2a;
}

.app-search input {
    width: 70px;
}

.win-btns {
    display: flex;
    align-self: flex-start;
    height: 17px;
    margin-right: 3px;
    border: 1px solid #2c2c2c;
    border-top: none;
    border-radius: 0 0 4px 4px;
}

.win-btns button {
    display: flex;
    align-items: center;
    justify-content: center;
    width: 28px;
    border-right: 1px solid #2c2c2c;
}

.win-btns .wide {
    width: 45px;
    border-right: none;
}

/* control bar */
.controlbar {
    display: flex;
    align-items: center;
    height: 35px;
    flex-shrink: 0;
    padding: 0 16px 0 4px;
    border-top: 1px solid #5a5a5a;
    border-bottom: 1px solid #222;
}

.grip {
    width: 4px;
    height: 20px;
    background: repeating-linear-gradient(#222 0 1px, #555 1px 2px);
}

.selection {
    width: 93px;
    padding-left: 7px;
}

.combo {
    display: flex;
    height: 19px;
    margin-left: 7px;
    border: 1px solid #222;
    flex-shrink: 0;
}

.arrow {
    width: 15px;
    border-left: 1px solid #222;
    background: linear-gradient(#626262, #505050);
}

.arrow::before {
    content: "";
    display: block;
    width: 0;
    margin: 0 auto;
    border: 4px solid transparent;
    border-top: 5px solid #ddd;
    border-bottom: none;
}

.fill {
    width: 18px;
    background-color: #fff;
}

.fill.grey {
    background-color: #e6e6e6;
}

.swatch-combo {
    margin-left: 6px;
}

.stroke {
    width: 18px;
    background-color: #000;
    border: 1px solid #fff;
    padding: 3px;
}

.stroke i {
    display: block;
    height: 10px;
    border: 2px solid #fff;
    background-color: #000;
}

.panel-link {
    margin-left: 8px;
    color: #e8923a;
    text-decoration: none;
    border-bottom: 1px dotted #e8923a;
    line-height: 15px;
    white-space: nowrap;
}

.stroke-link {
    margin-left: 12px;
}

.combo input {
    background-color: #a2a2a2;
    color: #000;
    padding-left: 3px;
}

.stepper {
    display: flex;
    flex-direction: column;
    align-items: center;
    justify-content: space-evenly;
    width: 16px;
    border-right: 1px solid #222;
}

.weight input {
    width: 46px;
}

.light {
    display: flex;
    align-items: center;
    width: 88px;
    padding: 0 5px;
    background-color: #e8e8e8;
    color: #000;
}

.light .line {
    width: 49px;
    height: 2px;
    margin-right: 6px;
    background-color: #000;
}

.profile .light {
    width: 89px;
}

.brush .light {
    gap: 10px;
}

.light .dot {
    width: 5px;
    height: 5px;
    border-radius: 50%;
    background-color: #000;
}

.opacity input {
    width: 51px;
}

.style-label {
    margin-left: 7px;
}

.controlbar > .combo + .divider {
    margin-left: 5px;
}

.bar-btn {
    width: 70px;
    height: 20px;
    margin-left: 6px;
    border: 1px solid #222;
    background: linear-gradient(#606060, #4c4c4c);
}

.bar-btn:first-of-type {
    margin-left: 5px;
}

.similar {
    margin-left: 10px;
}

.bar-menu {
    margin-left: auto;
}

/* work area */
.work {
    display: flex;
    flex: 1;
    min-height: 0;
    background-color: #222;
    gap: 2px;
}

.dock-head {
    height: 12px;
    padding: 3px 4px;
    background-color: #333;
    border-bottom: 1px solid #222;
    flex-shrink: 0;
}

.dock-head.end {
    display: flex;
    justify-content: flex-end;
    padding-right: 3px;
}

.tools {
    display: flex;
    flex-direction: column;
    width: 71px;
    flex-shrink: 0;
    background-color: #484848;
}

.tool-grip {
    width: 20px;
    height: 4px;
    margin: 4px auto 8px 25px;
    background: repeating-linear-gradient(90deg, #1c1c1c 0 1px, #555 1px 2px);
    flex-shrink: 0;
}

.tool-group {
    display: grid;
    grid-template-columns: 30px 30px;
    grid-auto-rows: 24px;
    margin: 0 6px 0 5px;
    padding-bottom: 1px;
    border-bottom: 1px solid #333;
    box-shadow: 0 1px #5a5a5a;
}

.tool {
    position: relative;
    display: flex;
    align-items: center;
    justify-content: center;
}

.tool.on {
    margin: 1px;
    background-color: #303030;
    border: 1px solid #1c1c1c;
}

.tool svg {
    width: 19px;
    height: 19px;
}

.tool.more::after {
    content: "";
    position: absolute;
    right: 2px;
    bottom: 1px;
    border: 2px solid #ddd;
    border-left-color: transparent;
    border-top-color: transparent;
}

.paint {
    margin: 2px 0 0 5px;
    align-self: flex-start;
}

.mode-row {
    display: flex;
    margin: 5px 0 0 7px;
    height: 19px;
    width: 60px;
    flex-shrink: 0;
    border: 1px solid #222;
}

.mode-row + .mode-row {
    height: 17px;
    margin-top: 7px;
}

.mode-row button {
    display: flex;
    align-items: center;
    justify-content: center;
    width: 20px;
    background-color: #555;
    border-right: 1px solid #222;
}

.mode-row .pressed {
    background-color: #333;
}

.screen-mode {
    margin: 8px 0 0 23px;
    align-self: flex-start;
}

.document {
    display: flex;
    flex-direction: column;
    flex: 1;
    min-width: 0;
}

.doc-tabs {
    height: 20px;
    flex-shrink: 0;
    background-color: #333;
    border-bottom: 1px solid #222;
}

.doc-tab {
    display: inline-flex;
    align-items: center;
    height: 19px;
    padding: 0 7px 0 10px;
    background-color: #4c4c4c;
    color: #bbb;
    font-size: 13px;
}

.doc-tab button {
    margin-left: 9px;
    font-size: 14px;
    line-height: 14px;
}

.doc-body {
    display: flex;
    flex: 1;
    min-height: 0;
}

.canvas {
    position: relative;
    flex: 1;
    overflow: hidden;
    background-color: #5c5c5c;
}

.vscroll {
    display: flex;
    flex-direction: column;
    align-items: center;
    width: 17px;
    padding: 6px 0;
    background-color: #333;
    border-left: 1px solid #222;
}

.vthumb {
    width: 15px;
    height: 15px;
    margin: 246px 0 auto;
    background-color: #999;
}

.statusbar {
    display: flex;
    align-items: center;
    height: 17px;
    flex-shrink: 0;
    background-color: #424242;
    border-top: 1px solid #222;
}

.gear {
    margin: 0 10px 0 7px;
}

.share {
    margin-right: 4px;
}

.statusbar .combo {
    height: 17px;
}

.statusbar .combo input {
    width: 41px;
}

.step {
    margin: 0 2px 0 9px;
}

.current-tool {
    align-self: stretch;
    flex: 1;
    margin-left: 6px;
    border-left: 1px solid #222;
    text-align: center;
}

.play {
    display: flex;
    align-items: center;
    width: 19px;
    height: 16px;
    padding-left: 7px;
    border-left: 1px solid #222;
}

.hscroll {
    display: flex;
    align-items: center;
    align-self: stretch;
    width: 314px;
    padding: 0 6px 0 5px;
    background-color: #333;
    border-left: 1px solid #222;
}

.hthumb {
    width: 15px;
    height: 15px;
    margin: 0 auto 0 136px;
    background-color: #888;
}

.corner {
    width: 16px;
    align-self: stretch;
    border-left: 1px solid #222;
}

/* explorer window floating over the canvas */
.explorer {
    position: absolute;
    inset: 7px 58px 17px 23px;
    display: flex;
    flex-direction: column;
    padding: 0 5px 5px;
    color: #111;
    border: 1px solid #eadfd8;
    border-radius: 6px;
    background: linear-gradient(115deg, #c5b5aa 0, #a58f80 12%, #8c6b58 20%, #8c6b58 66%, #ab9689 78%, #b5a398 100%) top / 100% 172px no-repeat, #8c6b58;
    box-shadow: 0 0 0 1px #1c1614, 3px 4px 12px 3px rgba(0, 0, 0, .75);
}

.ex-title {
    display: flex;
    justify-content: flex-end;
    height: 31px;
    flex-shrink: 0;
}

.ex-winbtns {
    display: flex;
    height: 19px;
    border: 1px solid #463a35;
    border-top: none;
    border-radius: 0 0 5px 5px;
    overflow: hidden;
    box-shadow: 0 0 0 1px #cdbdb3;
}

.ex-winbtns button {
    display: flex;
    align-items: center;
    justify-content: center;
    width: 28px;
    background: linear-gradient(#cfc2bb 50%, #948379 50%);
    border-right: 1px solid #463a35;
}

.ex-winbtns .ex-close {
    width: 46px;
    background: linear-gradient(#eda292 50%, #d03414 50%, #e06238);
    border-right: none;
}

.ex-nav {
    display: flex;
    align-items: center;
    height: 24px;
    margin: 0 2px 8px 3px;
    flex-shrink: 0;
}

.ex-back {
    margin-right: 4px;
}

.ex-address, .ex-search {
    display: flex;
    align-items: center;
    height: 23px;
    border: 1px solid #6d564a;
    outline: 1px solid #c4b2a7;
    background-color: #e2dedd;
}

.ex-address {
    flex: 1;
    padding-left: 3px;
}

.ex-address a {
    color: #222;
    text-decoration: none;
    white-space: nowrap;
}

.crumb {
    margin: 0 9px 0 10px;
    border: 4px solid transparent;
    border-left: 5px solid #111;
    border-right: none;
}

.ex-drop {
    margin-left: auto;
    width: 20px;
}

.tri.navy {
    border-top-color: #10104c;
}

.ex-drop .tri {
    margin-bottom: 2px;
}

.ex-refresh {
    display: flex;
    align-items: center;
    justify-content: center;
    align-self: stretch;
    width: 24px;
    border-left: 1px solid #6d564a;
}

.ex-search {
    width: 241px;
    margin-left: 8px;
    padding: 0 5px 0 9px;
    background-color: #e6dfde;
}

.ex-search input {
    flex: 1;
    font-style: italic;
}

.ex-search input::placeholder {
    color: #888;
    opacity: 1;
}

.ex-body {
    display: flex;
    flex-direction: column;
    flex: 1;
    min-height: 0;
    border: 1px solid #4d3b31;
    outline: 1px solid #c9b8ac;
    background-color: #fff;
}

.ex-menu {
    display: flex;
    gap: 17px;
    height: 22px;
    padding-left: 10px;
    flex-shrink: 0;
    background: linear-gradient(#fff, #eef2fa 45%, #dbe5f3 50%, #dfe8f5);
    border-bottom: 1px solid #b7c4d6;
}

.ex-toolbar {
    display: flex;
    align-items: center;
    gap: 30px;
    height: 32px;
    padding: 0 15px 0 18px;
    flex-shrink: 0;
    color: #16457c;
    background: linear-gradient(#fbfdff, #eef5fc 50%, #dce8f6 50%, #dde9f7);
    border-bottom: 1px solid #a9b9cb;
}

.ex-toolbar .tri {
    margin: 0 0 2px 2px;
    border-top-color: #0b3a78;
}

.ex-views {
    display: flex;
    align-items: center;
    gap: 21px;
    margin-left: auto;
}

.help {
    width: 16px;
    height: 16px;
    border: 1px solid #8a99ab;
    border-radius: 50%;
    background-color: #1c4e93;
    color: #fff;
    font-weight: bold;
    line-height: 14px;
}

.ex-content {
    display: flex;
    flex: 1;
    min-height: 0;
}

.tree {
    width: 213px;
    margin: 0;
    padding: 0;
    list-style: none;
    overflow: hidden;
    flex-shrink: 0;
}

.tree li {
    display: flex;
    align-items: center;
    gap: 7px;
    height: 23px;
    margin-left: 1px;
    padding-left: 39px;
    color: #111;
    font-size: 12px;
}

.tree .drive {
    gap: 5px;
    padding-left: 29px;
}

.tree .current {
    background: linear-gradient(#f8f8f8, #e6e6e6);
    border: 1px solid #dde3e8;
    border-width: 1px 0;
}

.tree-scroll {
    display: flex;
    flex-direction: column;
    align-items: center;
    width: 16px;
    padding: 7px 0 5px;
    background-color: #f1f0f0;
}

.tree-scroll .up, .tree-scroll .tri {
    border-left-width: 3px;
    border-right-width: 3px;
}

.tree-scroll .up {
    border-bottom: 4px solid #333;
}

.tree-scroll .tri {
    border-top: 4px solid #333;
}

.tree-thumb {
    display: flex;
    align-items: center;
    justify-content: center;
    width: 15px;
    height: 53px;
    margin: 94px 0 auto;
    border: 1px solid #979797;
    border-radius: 2px;
    background: linear-gradient(90deg, #f6f6f6, #c9cacd);
}

.tree-thumb i {
    width: 7px;
    height: 8px;
    background: repeating-linear-gradient(#666 0 1px, #eee 1px 3px);
}

.files {
    flex: 1;
    margin-left: 1px;
    border-left: 1px solid #dfe5ec;
    padding-top: 16px;
    text-align: center;
    color: #6d6d6d;
}

.ex-details {
    display: flex;
    height: 53px;
    padding: 4px 18px;
    flex-shrink: 0;
    gap: 21px;
    color: #1e4c86;
    font-size: 13px;
    background-color: #f0f5fd;
    border-top: 1px solid #cfd9e4;
}

.ex-details span {
    padding-top: 2px;
}

.ex-status {
    display: flex;
    align-items: center;
    height: 22px;
    flex-shrink: 0;
    background-color: #f2f0ef;
    border-top: 1px solid #999;
}

.items {
    flex: 1;
    padding-left: 2px;
}

.blank {
    width: 91px;
    height: 18px;
    border-left: 1px solid #ccc;
}

.computer {
    display: flex;
    align-items: center;
    gap: 4px;
    width: 143px;
    height: 18px;
    padding-left: 4px;
    border-left: 1px solid #ccc;
}

.resize {
    align-self: flex-end;
}

/* right dock */
.dock {
    display: flex;
    flex-direction: column;
    width: 242px;
    flex-shrink: 0;
    gap: 2px;
}

.dock .dock-head {
    margin-bottom: -2px;
}

.panel {
    background-color: #484848;
    border-bottom: 1px solid #565656;
}

.tabs {
    display: flex;
    height: 19px;
    background-color: #353535;
    border-top: 1px solid #555;
}

.tabs button {
    padding: 0 6px 1px 7px;
    border-right: 1px solid #242424;
    background-color: #3c3c3c;
    color: #999;
}

.tabs .active {
    background-color: #484848;
    color: #e4e4e4;
}

.tabs .sort {
    display: flex;
    align-items: center;
    gap: 4px;
    padding-left: 5px;
}

.tab-menu {
    margin: 4px 4px 0 auto;
}

.layers {
    position: relative;
    display: flex;
    flex-direction: column;
    flex: 1;
    min-height: 0;
}

.layer-list {
    flex: 1;
    margin: 5px 6px 0 5px;
    border: 1px solid #2a2a2a;
}

.layer {
    display: flex;
    align-items: center;
    height: 21px;
    border-bottom: 1px solid #2a2a2a;
}

.layer.selected {
    background: linear-gradient(225deg, #ddd 4px, transparent 4px), #52667a;
}

.layer > span {
    display: flex;
    align-self: stretch;
    width: 21px;
    padding: 4px 0 0 3px;
    border-right: 1px solid #2a2a2a;
}

.layer > i {
    width: 4px;
    height: 18px;
    margin-left: 1px;
}

.layer > i.blue {
    background-color: #5353dc;
}

.layer > i.cyan {
    background-color: #2fe8ec;
}

.layer > i.pink {
    background-color: #dd50dd;
}

.layer > i.green {
    background-color: #22e03c;
}

.layer > i.red {
    background-color: #de5350;
}

.layer b {
    margin: 0 10px 0 6px;
    border: 4px solid transparent;
    border-left: 6px solid #ddd;
    border-right: none;
}

.layer em {
    flex: 1;
    padding-left: 6px;
    font-family: "Liberation Mono", monospace;
    font-size: 10px;
    font-style: normal;
}

.layer .target {
    width: 35px;
    align-items: center;
    padding: 0 0 0 5px;
    border-right: none;
    border-left: 1px solid #2a2a2a;
}

.target::before {
    content: "";
    width: 9px;
    height: 9px;
    border: 1px solid #ccc;
    border-radius: 50%;
}

.layer-foot {
    display: flex;
    align-items: center;
    gap: 12px;
    height: 20px;
    padding: 0 26px 0 5px;
}

.layer-foot span {
    margin-right: auto;
}

.click-mark {
    position: absolute;
    left: 43px;
    top: 172px;
    display: flex;
    align-items: center;
}

.ball {
    width: 48px;
    height: 48px;
    border-radius: 50%;
    background-color: #02b306;
}

.count {
    width: 28px;
    height: 28px;
    border-radius: 50%;
    background-color: #161616;
    color: #fff;
    font-family: "Liberation Sans", sans-serif;
    font-size: 16px;
    line-height: 28px;
    text-align: center;
}

.color-body {
    padding: 6px 18px 7px 6px;
}

.mixer {
    display: flex;
    gap: 15px;
    margin-right: -13px;
}

.sliders {
    flex: 1;
    min-width: 0;
}

.slider-row {
    display: flex;
    align-items: center;
    height: 25px;
    font-family: "Liberation Mono", monospace;
    font-size: 10px;
}

.slider-row label {
    width: 17px;
}

.slider-row span {
    width: 18px;
}

.slider-row .mono {
    width: 33px;
    height: 19px;
    margin: 0 4px 0 7px;
    padding-left: 3px;
    background-color: #a0a0a0;
    border: 1px solid #222;
    color: #000;
}

.range {
    flex: 1;
    appearance: none;
    height: 6px;
    border: 1px solid #222;
}

.range::-webkit-slider-thumb {
    appearance: none;
    width: 8px;
    height: 8px;
    margin: 9px 0 0 -4px;
    background-color: #ccc;
    clip-path: polygon(50% 0, 100% 60%, 100% 100%, 0 100%, 0 60%);
}

.range.cyan {
    background: linear-gradient(90deg, #fff, #00a8e8 75%);
}

.range.magenta {
    background: linear-gradient(90deg, #fff, #f0a6ae 50%, #e4148c);
}

.range.yellow {
    background: linear-gradient(90deg, #fff, #fff200);
}

.range.black {
    background: linear-gradient(90deg, #fff, #222);
}

.chips {
    margin: 7px 0 10px;
}

.spectrum {
    height: 21px;
    background:
        linear-gradient(#fff, rgba(255, 255, 255, 0) 45%, rgba(0, 0, 0, 0) 65%, #000),
        radial-gradient(ellipse 22% 75% at 34% 85%, #08a818 60%, rgba(8, 168, 24, 0)),
        linear-gradient(90deg, #e01020, #f07010 9%, #ffe010 17%, #70c850 27%, #60c880 42%, #10c0f0 52%, #1040b0 66%, #7030a0 78%, #ff1090 89%, #e01020);
}

.watermark {
    position: absolute;
    left: 15px;
    bottom: 24px;
    color: #fff;
    font-family: "Noto Sans CJK SC", sans-serif;
    font-size: 24px;
    line-height: 34px;
    white-space: nowrap;
    -webkit-text-stroke: 7px #1c1c1c;
    paint-order: stroke fill;
}

.watermark span {
    font-family: Inter, "Liberation Sans", sans-serif;
    font-size: 25px;
}
```
